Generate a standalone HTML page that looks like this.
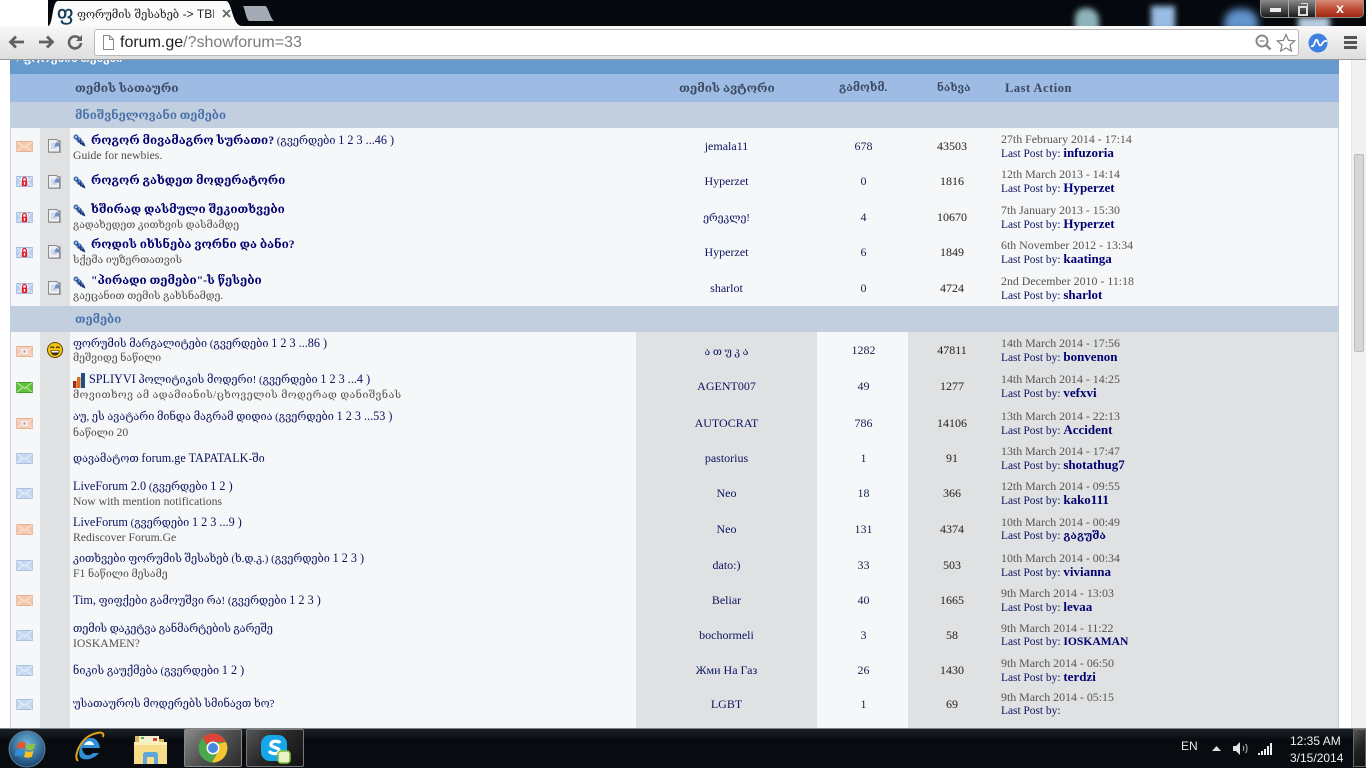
<!DOCTYPE html>
<html lang="ka"><head><meta charset="utf-8"><title>ფორუმის შესახებ</title>
<style>
html,body{margin:0;padding:0;width:1366px;height:768px;overflow:hidden;background:#fff}
body{position:relative;font-family:"Liberation Serif","DejaVu Serif",serif;font-size:12px;color:#000070}
div,span.a,svg.a{position:absolute}
.t{position:absolute;white-space:nowrap;line-height:14px;height:14px}
.ti{left:73px;font-size:10.900px;color:#0c1460}
.ti b{font-size:11.700px;color:#000070}
.ti .e{font-size:12.200px}
.su{left:73px;font-size:10.500px;color:#4f4f4f;margin-top:1px}
.su .e{font-size:11.700px}
.au{left:636px;width:181px;text-align:center;color:#0c1460}
.au .g{font-size:10.500px}
.re{left:818px;width:91px;text-align:center;color:#14234f}
.vi{left:908px;width:88px;text-align:center;color:#222}
.da{left:1001px;color:#555;font-size:11.900px}
.lp{left:1001px;color:#0c1460;font-size:11.400px}
.lp b{color:#000070;font-size:13px}
.hd{font-weight:bold;color:#3b4a63;top:81px}
.sec{font-size:11.500px;font-weight:bold;color:#4a70ac;left:75px}
</style></head><body>
<svg width="0" height="0" style="position:absolute">
<defs>
<symbol id="eo" viewBox="0 0 18 12"><rect x=".5" y=".5" width="17" height="11" fill="#f5c9ae" stroke="#e4ae90"/><path d="M1 1l8 6 8-6M1 11l6-5M17 11l-6-5" fill="none" stroke="#fbe6d8"/></symbol>
<symbol id="eb" viewBox="0 0 18 12"><rect x=".5" y=".5" width="17" height="11" fill="#c6d9f0" stroke="#a5bfdc"/><path d="M1 1l8 6 8-6M1 11l6-5M17 11l-6-5" fill="none" stroke="#e8f0fa"/></symbol>
<symbol id="eg" viewBox="0 0 18 12"><rect x=".5" y=".5" width="17" height="11" fill="#63c23c" stroke="#3f9a25"/><path d="M1 1l8 6 8-6M1 11l6-5M17 11l-6-5" fill="none" stroke="#c7efad"/></symbol>
<symbol id="ed" viewBox="0 0 18 12"><rect x=".5" y=".5" width="17" height="11" fill="#f3cdb9" stroke="#e4ae90"/><path d="M1 1l6 5M17 1l-6 5M1 11l6-5M17 11l-6-5" fill="none" stroke="#fbe6d8"/><rect x="6" y="3" width="6" height="6" fill="#f7efe9"/><circle cx="9" cy="6" r="1.3" fill="#98a0a8"/></symbol>
<symbol id="el" viewBox="0 0 18 12"><rect x=".5" y=".5" width="17" height="11" fill="#b9d2ef" stroke="#9db9da"/><path d="M1 1l5 5M17 1l-5 5M1 11l5-5M17 11l-5-5" stroke="#e4edf8" fill="none"/><rect x="5" y="1" width="8" height="10" fill="#eef2f8"/><rect x="6" y="5" width="6" height="6" rx="1" fill="#e01f2a"/><path d="M7 6V3.500a2 2 0 014 0V6" fill="none" stroke="#e01f2a" stroke-width="1.300"/><rect x="8.300" y="6.500" width="1.400" height="3" fill="#fff"/></symbol>
<symbol id="dc" viewBox="0 0 13 14"><rect x="1" y="1" width="12" height="13" fill="#a9a9a9"/><path d="M.5.500h8l3 3v9.500h-11z" fill="#eef0f5" stroke="#8a8a8a"/><rect x="3" y="4" width="6" height="6" fill="#d3d9e6"/><path d="M6 9l2-6 3 1 1 2-2 2-2-1z" fill="#6f8fc9"/></symbol>
<symbol id="pn" viewBox="0 0 13 13"><path d="M1.500 2.500l2-1.500 8 8.500 1 3-3-1z" fill="#1b3e86"/><circle cx="3" cy="3" r="2.500" fill="#3e6fb8"/><circle cx="6" cy="6" r="2.600" fill="#214a98"/><circle cx="8.500" cy="8.500" r="2" fill="#163478"/><circle cx="3" cy="3" r="1" fill="#bcd2ef"/><circle cx="6.500" cy="5" r=".9" fill="#a9c4e8"/><circle cx="4.500" cy="7" r=".8" fill="#8aa9d8"/><circle cx="9" cy="8" r=".7" fill="#bcd2ef"/></symbol>
</defs></svg>

<!-- page -->
<div style="left:0;top:60px;width:1366px;height:668px;background:#fff"></div>
<div style="left:10px;top:60px;width:1329px;height:14px;background:#6699cc;overflow:hidden"><span class="t" style="left:6px;top:-7px;color:#fff;font-weight:bold;font-size:10.500px">› ფორუმის თემები</span></div>
<div style="left:10px;top:74px;width:1329px;height:28px;background:#9dbbe3"></div>
<div style="left:10px;top:102px;width:1329px;height:26px;background:#c1cfdf"></div>
<div style="left:10px;top:128px;width:1329px;height:178px;background:#f5f7f8"></div>
<div style="left:10px;top:306px;width:1329px;height:26px;background:#c1cfdf"></div>
<div style="left:10px;top:332px;width:1329px;height:396px;background:#f5f7f8"></div>
<div style="left:40px;top:128px;width:30px;height:178px;background:#dfe1e2"></div>
<div style="left:40px;top:332px;width:30px;height:396px;background:#dfe1e2"></div>
<div style="left:636px;top:332px;width:181px;height:396px;background:#dfe1e2"></div>
<div style="left:908px;top:332px;width:431px;height:396px;background:#dfe1e2"></div>
<div style="left:10px;top:128px;width:1px;height:600px;background:#c1cfdf"></div>
<div style="left:1338px;top:128px;width:1px;height:600px;background:#c1cfdf"></div>

<div class="t hd" style="left:75px;font-size:11.900px">თემის სათაური</div>
<div class="t hd" style="left:679px;font-size:11.900px">თემის ავტორი</div>
<div class="t hd" style="left:839px;font-size:11.200px">გამოხმ.</div>
<div class="t hd" style="left:937px;font-size:10.800px">ნახვა</div>
<div class="t hd" style="left:1005px;font-size:12.500px;letter-spacing:.5px">Last Action</div>
<div class="t sec" style="top:109px">მნიშვნელოვანი თემები</div>
<div class="t sec" style="top:313px">თემები</div>

<!-- env icons -->
<svg class="a" style="left:16px;top:141px" width="17" height="11"><use href="#eo" width="17" height="11"/></svg>
<svg class="a" style="left:16px;top:176px" width="17" height="11"><use href="#el" width="17" height="11"/></svg>
<svg class="a" style="left:16px;top:212px" width="17" height="11"><use href="#el" width="17" height="11"/></svg>
<svg class="a" style="left:16px;top:247px" width="17" height="11"><use href="#el" width="17" height="11"/></svg>
<svg class="a" style="left:16px;top:283px" width="17" height="11"><use href="#el" width="17" height="11"/></svg>
<svg class="a" style="left:16px;top:346px" width="17" height="11"><use href="#ed" width="17" height="11"/></svg>
<svg class="a" style="left:16px;top:382px" width="17" height="11"><use href="#eg" width="17" height="11"/></svg>
<svg class="a" style="left:16px;top:418px" width="17" height="11"><use href="#ed" width="17" height="11"/></svg>
<svg class="a" style="left:16px;top:453px" width="17" height="11"><use href="#eb" width="17" height="11"/></svg>
<svg class="a" style="left:16px;top:488px" width="17" height="11"><use href="#eb" width="17" height="11"/></svg>
<svg class="a" style="left:16px;top:524px" width="17" height="11"><use href="#eo" width="17" height="11"/></svg>
<svg class="a" style="left:16px;top:560px" width="17" height="11"><use href="#eb" width="17" height="11"/></svg>
<svg class="a" style="left:16px;top:595px" width="17" height="11"><use href="#eo" width="17" height="11"/></svg>
<svg class="a" style="left:16px;top:630px" width="17" height="11"><use href="#eb" width="17" height="11"/></svg>
<svg class="a" style="left:16px;top:665px" width="17" height="11"><use href="#eb" width="17" height="11"/></svg>
<svg class="a" style="left:16px;top:699px" width="17" height="11"><use href="#eb" width="17" height="11"/></svg>

<!-- doc icons -->
<svg class="a" style="left:48px;top:139px" width="13" height="14"><use href="#dc" width="13" height="14"/></svg>
<svg class="a" style="left:48px;top:175px" width="13" height="14"><use href="#dc" width="13" height="14"/></svg>
<svg class="a" style="left:48px;top:209px" width="13" height="14"><use href="#dc" width="13" height="14"/></svg>
<svg class="a" style="left:48px;top:245px" width="13" height="14"><use href="#dc" width="13" height="14"/></svg>
<svg class="a" style="left:48px;top:281px" width="13" height="14"><use href="#dc" width="13" height="14"/></svg>
<!-- pins -->
<svg class="a" style="left:73px;top:134px" width="13" height="13"><use href="#pn" width="13" height="13"/></svg>
<svg class="a" style="left:73px;top:176px" width="13" height="13"><use href="#pn" width="13" height="13"/></svg>
<svg class="a" style="left:73px;top:204px" width="13" height="13"><use href="#pn" width="13" height="13"/></svg>
<svg class="a" style="left:73px;top:240px" width="13" height="13"><use href="#pn" width="13" height="13"/></svg>
<svg class="a" style="left:73px;top:276px" width="13" height="13"><use href="#pn" width="13" height="13"/></svg>
<!-- smiley -->
<svg class="a" style="left:47px;top:342px" width="16" height="16" viewBox="0 0 16 16"><circle cx="8" cy="8" r="7.500" fill="#f3c414" stroke="#5c4a08"/><path d="M3.500 8.500h9c0 3-2 5-4.500 5s-4.500-2-4.500-5z" fill="#3a2a05"/><path d="M4.500 9h7v1.500h-7z" fill="#fff"/><path d="M3.500 6c1-1.500 2.500-1.500 3.500 0M9 6c1-1.500 2.500-1.500 3.500 0" stroke="#3a2a05" fill="none" stroke-width="1.200"/></svg>
<!-- bars -->
<svg class="a" style="left:73px;top:373px" width="13" height="15" viewBox="0 0 13 15"><rect x="0" y="8" width="3.500" height="7" fill="#a3281c"/><rect x="4" y="4" width="3.500" height="11" fill="#d8701c"/><rect x="8" y="0" width="4" height="15" fill="#1f4f82"/></svg>

<!-- titles -->
<div class="t ti" style="top:133px;left:91px"><b>როგორ მივამაგრო სურათი?</b> (გვერდები <span class="e">1 2 3 ...46 )</span></div>
<div class="t su" style="top:148px"><span class="e">Guide for newbies.</span></div>
<div class="t ti" style="top:174px;left:91px"><b>როგორ გახდეთ მოდერატორი</b></div>
<div class="t ti" style="top:203px;left:91px"><b>ხშირად დასმული შეკითხვები</b></div>
<div class="t su" style="top:218px">გადახედეთ კითხვის დასმამდე</div>
<div class="t ti" style="top:238px;left:91px"><b>როდის იხსნება ვორნი და ბანი?</b></div>
<div class="t su" style="top:253px">სქემა იუზერთათვის</div>
<div class="t ti" style="top:274px;left:91px"><b>"პირადი თემები"-ს წესები</b></div>
<div class="t su" style="top:289px">გაეცანით თემის გახსნამდე.</div>

<div class="t ti" style="top:336px">ფორუმის მარგალიტები (გვერდები <span class="e">1 2 3 ...86 )</span></div>
<div class="t su" style="top:351px">მეშვიდე ნაწილი</div>
<div class="t ti" style="top:372px;left:89px"><span class="e">SPLIYVI</span> პოლიტიკის მოდერი! (გვერდები <span class="e">1 2 3 ...4 )</span></div>
<div class="t su" style="top:388px;letter-spacing:.5px">მოვითხოვ ამ ადამიანის/ცხოველის მოდერად დანიშვნას</div>
<div class="t ti" style="top:409px">აუ, ეს ავატარი მინდა მაგრამ დიდია (გვერდები <span class="e">1 2 3 ...53 )</span></div>
<div class="t su" style="top:425px">ნაწილი <span class="e">20</span></div>
<div class="t ti" style="top:451px">დავამატოთ <span class="e">forum.ge TAPATALK</span>-ში</div>
<div class="t ti" style="top:479px"><span class="e">LiveForum 2.0</span> (გვერდები <span class="e">1 2 )</span></div>
<div class="t su" style="top:494px"><span class="e">Now with mention notifications</span></div>
<div class="t ti" style="top:515px"><span class="e">LiveForum</span> (გვერდები <span class="e">1 2 3 ...9 )</span></div>
<div class="t su" style="top:530px"><span class="e">Rediscover Forum.Ge</span></div>
<div class="t ti" style="top:551px">კითხვები ფორუმის შესახებ (ხ.დ.კ.) (გვერდები <span class="e">1 2 3 )</span></div>
<div class="t su" style="top:566px"><span class="e">F1</span> ნაწილი მესამე</div>
<div class="t ti" style="top:593px"><span class="e">Tim,</span> ფიფქები გამოუშვი რა! (გვერდები <span class="e">1 2 3 )</span></div>
<div class="t ti" style="top:622px;letter-spacing:-.1px">თემის დაკეტვა განმარტების გარეშე</div>
<div class="t su" style="top:636px"><span class="e">IOSKAMEN?</span></div>
<div class="t ti" style="top:663px">ნიკის გაუქმება (გვერდები <span class="e">1 2 )</span></div>
<div class="t ti" style="top:697px">უსათაუროს მოდერებს სმინავთ ხო?</div>

<!-- authors -->
<div class="t au" style="top:139px">jemala11</div>
<div class="t au" style="top:174px">Hyperzet</div>
<div class="t au" style="top:210px"><span class="g">ერეკლე!</span></div>
<div class="t au" style="top:245px">Hyperzet</div>
<div class="t au" style="top:281px">sharlot</div>
<div class="t au" style="top:344px"><span class="g">ა თ უ კ ა</span></div>
<div class="t au" style="top:379px">AGENT007</div>
<div class="t au" style="top:416px">AUTOCRAT</div>
<div class="t au" style="top:451px">pastorius</div>
<div class="t au" style="top:486px">Neo</div>
<div class="t au" style="top:522px">Neo</div>
<div class="t au" style="top:558px">dato:)</div>
<div class="t au" style="top:593px">Beliar</div>
<div class="t au" style="top:628px">bochormeli</div>
<div class="t au" style="top:663px">Жми На Газ</div>
<div class="t au" style="top:697px">LGBT</div>

<!-- replies -->
<div class="t re" style="top:139px">678</div>
<div class="t re" style="top:174px">0</div>
<div class="t re" style="top:210px">4</div>
<div class="t re" style="top:245px">6</div>
<div class="t re" style="top:281px">0</div>
<div class="t re" style="top:343px">1282</div>
<div class="t re" style="top:379px">49</div>
<div class="t re" style="top:416px">786</div>
<div class="t re" style="top:451px">1</div>
<div class="t re" style="top:486px">18</div>
<div class="t re" style="top:522px">131</div>
<div class="t re" style="top:558px">33</div>
<div class="t re" style="top:593px">40</div>
<div class="t re" style="top:628px">3</div>
<div class="t re" style="top:663px">26</div>
<div class="t re" style="top:697px">1</div>

<!-- views -->
<div class="t vi" style="top:139px">43503</div>
<div class="t vi" style="top:174px">1816</div>
<div class="t vi" style="top:210px">10670</div>
<div class="t vi" style="top:245px">1849</div>
<div class="t vi" style="top:281px">4724</div>
<div class="t vi" style="top:343px">47811</div>
<div class="t vi" style="top:379px">1277</div>
<div class="t vi" style="top:416px">14106</div>
<div class="t vi" style="top:451px">91</div>
<div class="t vi" style="top:486px">366</div>
<div class="t vi" style="top:522px">4374</div>
<div class="t vi" style="top:558px">503</div>
<div class="t vi" style="top:593px">1665</div>
<div class="t vi" style="top:628px">58</div>
<div class="t vi" style="top:663px">1430</div>
<div class="t vi" style="top:697px">69</div>

<!-- last action -->
<div class="t da" style="top:132px">27th February 2014 - 17:14</div><div class="t lp" style="top:146px">Last Post by: <b>infuzoria</b></div>
<div class="t da" style="top:167px">12th March 2013 - 14:14</div><div class="t lp" style="top:181px">Last Post by: <b>Hyperzet</b></div>
<div class="t da" style="top:203px">7th January 2013 - 15:30</div><div class="t lp" style="top:217px">Last Post by: <b>Hyperzet</b></div>
<div class="t da" style="top:238px">6th November 2012 - 13:34</div><div class="t lp" style="top:252px">Last Post by: <b>kaatinga</b></div>
<div class="t da" style="top:274px">2nd December 2010 - 11:18</div><div class="t lp" style="top:288px">Last Post by: <b>sharlot</b></div>
<div class="t da" style="top:336px">14th March 2014 - 17:56</div><div class="t lp" style="top:350px">Last Post by: <b>bonvenon</b></div>
<div class="t da" style="top:372px">14th March 2014 - 14:25</div><div class="t lp" style="top:386px">Last Post by: <b>vefxvi</b></div>
<div class="t da" style="top:409px">13th March 2014 - 22:13</div><div class="t lp" style="top:423px">Last Post by: <b>Accident</b></div>
<div class="t da" style="top:444px">13th March 2014 - 17:47</div><div class="t lp" style="top:458px">Last Post by: <b>shotathug7</b></div>
<div class="t da" style="top:479px">12th March 2014 - 09:55</div><div class="t lp" style="top:493px">Last Post by: <b>kako111</b></div>
<div class="t da" style="top:515px">10th March 2014 - 00:49</div><div class="t lp" style="top:529px">Last Post by: <b style="font-size:11px">გაგუშა</b></div>
<div class="t da" style="top:551px">10th March 2014 - 00:34</div><div class="t lp" style="top:565px">Last Post by: <b>vivianna</b></div>
<div class="t da" style="top:586px">9th March 2014 - 13:03</div><div class="t lp" style="top:600px">Last Post by: <b>levaa</b></div>
<div class="t da" style="top:621px">9th March 2014 - 11:22</div><div class="t lp" style="top:635px">Last Post by: <b style="font-size:11.600px">IOSKAMAN</b></div>
<div class="t da" style="top:656px">9th March 2014 - 06:50</div><div class="t lp" style="top:670px">Last Post by: <b>terdzi</b></div>
<div class="t da" style="top:690px">9th March 2014 - 05:15</div><div class="t lp" style="top:704px">Last Post by:</div>

<!-- scrollbar -->
<div style="left:1351px;top:60px;width:15px;height:668px;background:#f1f1f1;border-left:1px solid #e6e6e6;box-sizing:border-box"></div>
<div style="left:1354px;top:154px;width:10px;height:198px;background:#d6d6d6;border:1px solid #bdbdbd;border-radius:2px;box-sizing:border-box"></div>

<!-- title bar -->
<div style="left:48px;top:0;width:1318px;height:26px;background:#05090e;overflow:hidden">
 <div style="left:1027px;top:8px;width:24px;height:24px;background:#8db4ba;border-radius:10px 12px 0 0;filter:blur(3px)"></div>
 <div style="left:1103px;top:6px;width:24px;height:24px;background:#98bde4;filter:blur(3px)"></div>
 <div style="left:1176px;top:9px;width:34px;height:22px;background:#6395cf;border-radius:14px 14px 0 0;filter:blur(4px)"></div>
 <div style="left:1250px;top:17px;width:32px;height:14px;background:#b8cce0;filter:blur(3px)"></div>
</div>
<!-- window controls -->
<div style="left:1260px;top:0;width:104px;height:18px;border:1px solid #8d8d8d;border-top:0;border-radius:0 0 5px 5px;box-sizing:border-box;background:#333;overflow:hidden">
 <div style="left:0;top:0;width:27px;height:17px;background:linear-gradient(#8a8a8a,#4c4c4c 55%,#1a1a1a);border-right:1px solid #aaa"></div>
 <div style="left:9px;top:8px;width:11px;height:4px;background:#eee"></div>
 <div style="left:28px;top:0;width:26px;height:17px;background:linear-gradient(#8a8a8a,#4c4c4c 55%,#1a1a1a);border-right:1px solid #aaa"></div>
 <div style="left:37px;top:6px;width:6px;height:6px;border:2px solid #ddd"></div>
 <div style="left:40px;top:3px;width:6px;height:6px;border:1px solid #ddd;border-left:0;border-bottom:0"></div>
 <div style="left:55px;top:0;width:48px;height:17px;background:linear-gradient(#d88a7a,#bd4a32 55%,#a02a14)"></div>
 <div class="t" style="left:55px;top:1px;width:48px;text-align:center;color:#fff;font:bold 14px/14px 'Liberation Sans',sans-serif">x</div>
</div>
<!-- tab -->
<svg class="a" style="left:48px;top:0" width="200" height="26" viewBox="0 0 200 26"><path d="M0 26C5 26 4 1 10 1H178c6 0 6 25 16 25z" fill="#fbfbfb"/></svg>
<svg class="a" style="left:242px;top:5px" width="34" height="17" viewBox="0 0 34 17"><path d="M1 1h22c3 0 5 12 9 15H7C4 14 3 4 1 1z" fill="#a4abb4"/></svg>
<div class="t" style="left:57px;top:3px;font:20px/20px 'DejaVu Sans',sans-serif;color:#123c5a;height:20px;-webkit-text-stroke:.4px #123c5a">ფ</div>
<div class="t" style="left:77px;top:7px;width:137px;overflow:hidden;color:#222;font:11px/14px 'DejaVu Serif','Liberation Sans',sans-serif">ფორუმის შესახებ <span style="font:12px/14px 'Liberation Sans',sans-serif">-&gt; TBII</span></div>
<svg class="a" style="left:222px;top:9px" width="9" height="9"><path d="M1 1l7 7M8 1l-7 7" stroke="#666" stroke-width="1.800"/></svg>

<!-- toolbar -->
<div style="left:0;top:26px;width:1366px;height:34px;background:linear-gradient(#f8f8f8,#dedede);border-bottom:1px solid #9a9a9a;box-sizing:border-box"></div>
<div style="left:94px;top:29px;width:1205px;height:27px;background:#fff;border:1px solid #b9b9b9;border-radius:3px;box-sizing:border-box"></div>
<svg class="a" style="left:8px;top:35px" width="17" height="14" viewBox="0 0 17 14"><path d="M16 7H3M8 1.500L2.500 7 8 12.500" stroke="#616161" stroke-width="2.800" fill="none"/></svg>
<svg class="a" style="left:38px;top:35px" width="17" height="14" viewBox="0 0 17 14"><path d="M1 7h13M9 1.500L14.500 7 9 12.500" stroke="#616161" stroke-width="2.800" fill="none"/></svg>
<svg class="a" style="left:67px;top:34px" width="16" height="16" viewBox="0 0 16 16"><path d="M13 5A6 6 0 1 0 14 9" stroke="#616161" stroke-width="2.600" fill="none"/><path d="M15 1v6H9z" fill="#616161"/></svg>
<svg class="a" style="left:102px;top:35px" width="12" height="15" viewBox="0 0 12 15"><path d="M1.500.5h6l4 4v10h-10z" fill="#fff" stroke="#8b8b8b"/><path d="M7.500.5v4h4" fill="none" stroke="#8b8b8b"/></svg>
<div class="t" style="left:120px;top:33px;height:20px;font:16px/20px 'Liberation Sans',sans-serif;color:#7b7b7b"><span style="color:#222">forum.ge</span>/?showforum=33</div>
<svg class="a" style="left:1255px;top:34px" width="17" height="17" viewBox="0 0 17 17"><circle cx="7" cy="7" r="5.500" fill="none" stroke="#8a8a8a" stroke-width="2"/><path d="M11 11l4.500 4.500" stroke="#8a8a8a" stroke-width="2.400"/><path d="M4.500 7h5" stroke="#8a8a8a" stroke-width="1.300"/></svg>
<svg class="a" style="left:1276px;top:33px" width="20" height="19" viewBox="0 0 20 19"><path d="M10 1.500l2.500 5.800 6.200.6-4.700 4.100 1.400 6.100L10 14.900l-5.400 3.200L6 12 1.300 7.900l6.200-.6z" fill="#fff" stroke="#7f7f7f" stroke-width="1.200"/></svg>
<svg class="a" style="left:1308px;top:33px" width="20" height="20" viewBox="0 0 20 20"><circle cx="10" cy="10" r="9.500" fill="#3f80e0"/><path d="M3 13c2 1 3-1 4-4s2-3 3 0 2 5 4 2 2-3 5-3" stroke="#fff" stroke-width="1.800" fill="none"/></svg>
<div style="left:1344px;top:36px;width:13px;height:3px;background:#555"></div>
<div style="left:1344px;top:41px;width:13px;height:3px;background:#555"></div>
<div style="left:1344px;top:46px;width:13px;height:3px;background:#555"></div>

<!-- taskbar -->
<div style="left:0;top:728px;width:1366px;height:40px;background:linear-gradient(#1a2025,#070b10 30%,#090d12);border-top:1px solid #7d8388;box-sizing:border-box"></div>
<svg class="a" style="left:8px;top:730px" width="38" height="38" viewBox="0 0 38 38"><defs><radialGradient id="o" cx=".5" cy=".35" r=".7"><stop offset="0" stop-color="#6fb7dc"/><stop offset="1" stop-color="#0e3a66"/></radialGradient></defs><circle cx="19" cy="19" r="18" fill="url(#o)" stroke="#5d7e96"/><path d="M10 13c3-2 6-1 8 0l-1.500 6c-2-1-5-2-8 0z" fill="#e4572e"/><path d="M19.500 13.500c3 1.500 6 1 8-.5l-1.500 6c-2 1.500-5 1.500-8 .5z" fill="#8cc63f"/><path d="M8 20.500c3-2 6-1 8 0L14.500 26.500c-2-1-5-1.500-8 0z" fill="#2f8fdc"/><path d="M17.500 21c3 1.500 6 1 8-.5L24 26.500c-2 1.500-5 1.500-8 .5z" fill="#f8c223"/></svg>
<svg class="a" style="left:72px;top:730px" width="34" height="36" viewBox="0 0 34 36"><path d="M10 18h18C27 9 20 6 15 9 8 13 5 24 9 28c4 3 13 1 18-5h-6c-4 4-10 3-11-5z" fill="#2f8fd6"/><path d="M12 15h10c-1-5-8-5-10 0z" fill="#fff"/><path d="M6 31C1 27 8 10 19 5c7-3 14-4 12 2" fill="none" stroke="#e3a41c" stroke-width="2"/></svg>
<svg class="a" style="left:134px;top:733px" width="33" height="32" viewBox="0 0 33 32"><path d="M1 3h12l2 3h15v8H1z" fill="#d8b75a"/><rect x="5" y="3" width="20" height="7" fill="#f4f0d0"/><rect x="7" y="4" width="3" height="2" fill="#4caf50"/><rect x="19" y="5" width="4" height="3" fill="#d9432f"/><path d="M0 9h33v22H0z" fill="#f7dd8a"/><path d="M0 9h33v3H0z" fill="#fbeeb8"/><path d="M9 31V22c0-2 1-3 3-3h9c2 0 3 1 3 3v9h-4v-7h-7v7z" fill="#5fa7d8"/></svg>
<div style="left:184px;top:729px;width:58px;height:38px;background:linear-gradient(135deg,#8a8a8a,#555 45%,#2a2a2a);border:1px solid #888;border-radius:2px;box-sizing:border-box"></div>
<div style="left:246px;top:729px;width:58px;height:38px;background:linear-gradient(135deg,#555,#2a2a2a 45%,#111);border:1px solid #777;border-radius:2px;box-sizing:border-box"></div>
<svg class="a" style="left:198px;top:733px" width="30" height="30" viewBox="0 0 30 30"><circle cx="15" cy="15" r="14.500" fill="#4aa94b"/><path d="M15 .5A14.500 14.500 0 0 1 28 9H15a6 6 0 0 0-6 3L4.500 5A14.500 14.500 0 0 1 15 .5z" fill="#dc4437"/><path d="M28 9A14.500 14.500 0 0 1 14 29.500L20 19a6 6 0 0 0 0-8z" fill="#f6c42f"/><circle cx="15" cy="15" r="6.500" fill="#fff"/><circle cx="15" cy="15" r="5" fill="#4a87e0"/></svg>
<svg class="a" style="left:260px;top:733px" width="31" height="31" viewBox="0 0 31 31"><rect x="1" y="2" width="26" height="26" rx="9" fill="#16a7e8"/><path d="M20 10c-1-2-8-3-9 1s9 3 8 7-8 3-10 0" fill="none" stroke="#fff" stroke-width="3.200"/><rect x="18" y="18" width="12" height="12" rx="3" fill="#e8f2c6" stroke="#7dbd3c" stroke-width="1.500"/></svg>

<div class="t" style="left:1181px;top:739px;color:#e8e8e8;font:12px/14px 'Liberation Sans',sans-serif">EN</div>
<svg class="a" style="left:1212px;top:746px" width="9" height="5"><path d="M0 5h9L4.500 0z" fill="#ddd"/></svg>
<svg class="a" style="left:1233px;top:741px" width="16" height="15" viewBox="0 0 16 15"><path d="M0 5h3l4-4v13l-4-4H0z" fill="#e4e4e4"/><path d="M10 5c1 1 1 4 0 5M12.500 3c2 2 2 7 0 9" stroke="#bbb" fill="none"/></svg>
<svg class="a" style="left:1258px;top:743px" width="15" height="12" viewBox="0 0 15 12"><rect x="0" y="10" width="2" height="2" fill="#eee"/><rect x="3" y="8" width="2" height="4" fill="#eee"/><rect x="6" y="6" width="2" height="6" fill="#eee"/><rect x="9" y="3" width="2" height="9" fill="#eee"/><rect x="12" y="0" width="2" height="12" fill="#eee"/></svg>
<div class="t" style="left:1290px;top:734px;color:#eee;font:12px/14px 'Liberation Sans',sans-serif">12:35 AM</div>
<div class="t" style="left:1290px;top:751px;color:#eee;font:12px/14px 'Liberation Sans',sans-serif">3/15/2014</div>
<div style="left:1353px;top:729px;width:13px;height:38px;background:linear-gradient(135deg,#555,#222 50%,#111);border:1px solid #666;box-sizing:border-box"></div>
</body></html>
